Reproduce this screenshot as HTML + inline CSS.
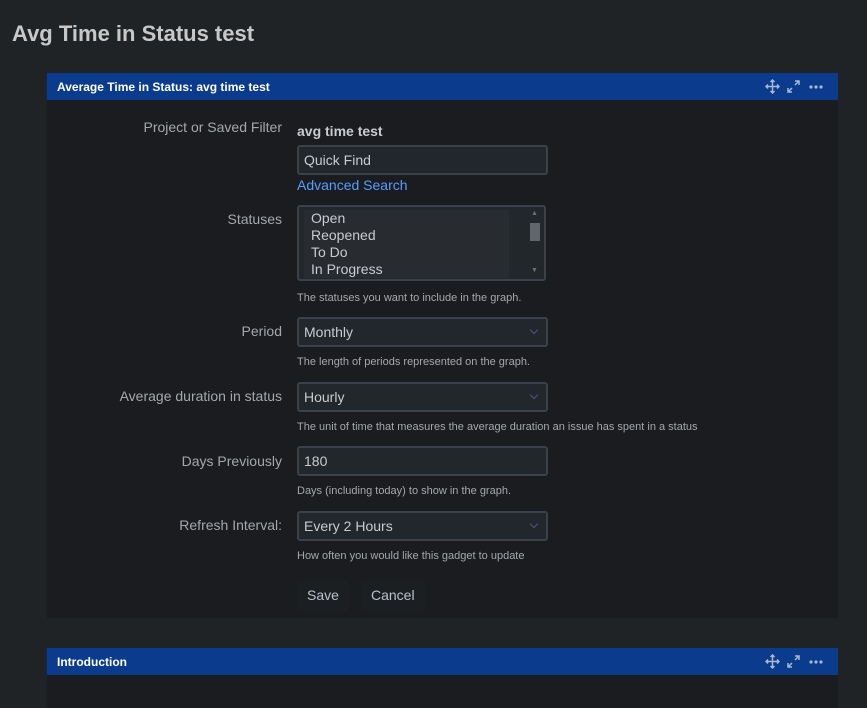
<!DOCTYPE html>
<html><head><meta charset="utf-8"><style>
body{margin:0;width:867px;height:697px;background:#1f2326;font-family:"Liberation Sans",sans-serif;position:relative;overflow:hidden;color:#c8cbd0}
.a{position:absolute}
h1{position:absolute;left:12px;top:21px;margin:0;font-size:22px;font-weight:bold;color:#c8c8c8}
.panel{position:absolute;left:47px;width:791px;background:#1a1c1f}
.hd{height:27px;background:#0b3b8d;color:#fff;font-size:12px;font-weight:bold;line-height:28px;padding-left:10px;position:relative}
.lbl{position:absolute;right:585px;font-size:14px;color:#a4a8ad;text-align:right;white-space:nowrap}
.in{position:absolute;left:297px;width:246px;height:26px;border:2px solid #3b4148;border-radius:3px;background:#22272b;font-size:14px;color:#c8cbd0;line-height:26px;padding-left:5px;box-sizing:content-box}
.sel::after{content:"";position:absolute;right:9px;top:8px;width:5px;height:5px;border-right:1.5px solid #4a5a80;border-bottom:1.5px solid #4a5a80;transform:rotate(45deg)}
.help{position:absolute;left:297px;font-size:11px;color:#a4a8ad}
.ic{position:absolute;top:6px;color:#a9b8d0;font-size:13px}
.btn{position:absolute;top:581px;height:30px;line-height:28px;font-size:14px;color:#b6c2cf;background:#1c1f22;padding:0 10px}
</style></head><body>
<h1>Avg Time in Status test</h1>
<div class="panel" style="top:73px;height:545px">
<div class="hd">Average Time in Status: avg time test
<svg class="ic" style="left:718px" width="15" height="15" viewBox="0 0 15 15" fill="none" stroke="#a9b8d0" stroke-width="1.5"><path d="M7.5 1v13M1 7.5h13M5.5 3l2-2 2 2M5.5 12l2 2 2-2M3 5.5l-2 2 2 2M12 5.5l2 2-2 2"/></svg>
<svg class="ic" style="left:739px" width="15" height="15" viewBox="0 0 15 15" fill="none" stroke="#a9b8d0" stroke-width="1.5"><path d="M2 13l4-4M2 9v4h4M13 2l-4 4M9 2h4v4"/></svg>
<svg class="ic" style="left:762px" width="14" height="15" viewBox="0 0 14 15" fill="#a9b8d0"><circle cx="2" cy="8" r="1.6"/><circle cx="7" cy="8" r="1.6"/><circle cx="12" cy="8" r="1.6"/></svg>
</div></div>
<div class="lbl" style="top:119px">Project or Saved Filter</div>
<div class="a" style="left:297px;top:123px;font-size:14px;font-weight:bold;color:#c8cbd0">avg time test</div>
<div class="in" style="top:145px;width:242px">Quick Find</div>
<div class="a" style="left:297px;top:177px;font-size:14px;color:#579dff">Advanced Search</div>
<div class="lbl" style="top:211px">Statuses</div>
<div class="in" style="top:205px;height:72px;width:245px;padding:0;border-color:#3b4148">
<div class="a" style="left:5px;top:3px;width:198px;height:68px;background:#282c30;line-height:17px;padding-left:7px">Open<br>Reopened<br>To Do<br>In Progress</div>
<div class="a" style="left:231px;top:16px;width:10px;height:18px;background:#5f666e"></div>
<div class="a" style="left:232px;top:3px;font-size:7px;color:#6a7078;line-height:8px">▲</div>
<div class="a" style="left:232px;top:60px;font-size:7px;color:#6a7078;line-height:8px">▼</div>
</div>
<div class="help" style="top:292px">The statuses you want to include in the graph.</div>
<div class="lbl" style="top:323px">Period</div>
<div class="in sel" style="top:317px;width:242px">Monthly</div>
<div class="help" style="top:356px">The length of periods represented on the graph.</div>
<div class="lbl" style="top:388px">Average duration in status</div>
<div class="in sel" style="top:382px;width:242px">Hourly</div>
<div class="help" style="top:421px">The unit of time that measures the average duration an issue has spent in a status</div>
<div class="lbl" style="top:453px">Days Previously</div>
<div class="in" style="top:446px;width:242px">180</div>
<div class="help" style="top:485px">Days (including today) to show in the graph.</div>
<div class="lbl" style="top:517px">Refresh Interval:</div>
<div class="in sel" style="top:511px;width:242px">Every 2 Hours</div>
<div class="help" style="top:550px">How often you would like this gadget to update</div>
<div class="btn" style="left:297px;">Save</div>
<div class="btn" style="left:361px;">Cancel</div>
<div class="panel" style="top:648px;height:60px">
<div class="hd">Introduction
<svg class="ic" style="left:718px" width="15" height="15" viewBox="0 0 15 15" fill="none" stroke="#a9b8d0" stroke-width="1.5"><path d="M7.5 1v13M1 7.5h13M5.5 3l2-2 2 2M5.5 12l2 2 2-2M3 5.5l-2 2 2 2M12 5.5l2 2-2 2"/></svg>
<svg class="ic" style="left:739px" width="15" height="15" viewBox="0 0 15 15" fill="none" stroke="#a9b8d0" stroke-width="1.5"><path d="M2 13l4-4M2 9v4h4M13 2l-4 4M9 2h4v4"/></svg>
<svg class="ic" style="left:762px" width="14" height="15" viewBox="0 0 14 15" fill="#a9b8d0"><circle cx="2" cy="8" r="1.6"/><circle cx="7" cy="8" r="1.6"/><circle cx="12" cy="8" r="1.6"/></svg>
</div></div>
</body></html>
